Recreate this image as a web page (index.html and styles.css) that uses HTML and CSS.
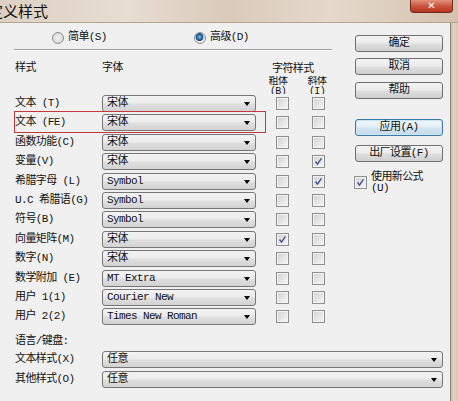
FILE: index.html
```html
<!DOCTYPE html>
<html lang="zh">
<head>
<meta charset="utf-8">
<title>定义样式</title>
<link rel="stylesheet" href="styles.css">
</head>
<body>
<div class="titlebar">
  <span class="title">定义样式</span>
  <span class="close">✕</span>
</div>
<div class="below">
  <div class="client">
    <div class="top">
      <div class="left">
        <div class="radios">
          <div class="radio-item first"><span class="radio"></span>简单(S)</div>
          <div class="radio-item"><span class="radio on"></span>高级(D)</div>
        </div>
        <div class="sep"></div>
        <div class="head">
          <div class="h-cell">样式</div>
          <div class="h-cell">字体</div>
          <div class="h-style">
            <div class="h-cell">字符样式</div>
            <div class="sub">
              <div class="sub-item">粗体<br>(B)</div>
              <div class="sub-item">斜体<br>(I)</div>
            </div>
          </div>
        </div>
        <div class="rows">
          <div class="lbl">文本 (T)</div><div class="dd"><span>宋体</span><i class="arrow"></i></div><span></span><span class="cb"></span><span></span><span class="cb"></span>
          <div class="lbl">文本 (FE)</div><div class="dd"><span>宋体</span><i class="arrow"></i></div><span></span><span class="cb"></span><span></span><span class="cb"></span>
          <div class="lbl">函数功能(C)</div><div class="dd"><span>宋体</span><i class="arrow"></i></div><span></span><span class="cb"></span><span></span><span class="cb"></span>
          <div class="lbl">变量(V)</div><div class="dd"><span>宋体</span><i class="arrow"></i></div><span></span><span class="cb"></span><span></span><span class="cb on"><svg viewBox="0 0 13 13"><path d="M3 6.5 L5.3 9.5 L10 2.8"/></svg></span>
          <div class="lbl">希腊字母 (L)</div><div class="dd"><span>Symbol</span><i class="arrow"></i></div><span></span><span class="cb"></span><span></span><span class="cb on"><svg viewBox="0 0 13 13"><path d="M3 6.5 L5.3 9.5 L10 2.8"/></svg></span>
          <div class="lbl">U.C 希腊语(G)</div><div class="dd"><span>Symbol</span><i class="arrow"></i></div><span></span><span class="cb"></span><span></span><span class="cb"></span>
          <div class="lbl">符号(B)</div><div class="dd"><span>Symbol</span><i class="arrow"></i></div><span></span><span class="cb"></span><span></span><span class="cb"></span>
          <div class="lbl">向量矩阵(M)</div><div class="dd"><span>宋体</span><i class="arrow"></i></div><span></span><span class="cb on"><svg viewBox="0 0 13 13"><path d="M3 6.5 L5.3 9.5 L10 2.8"/></svg></span><span></span><span class="cb"></span>
          <div class="lbl">数字(N)</div><div class="dd"><span>宋体</span><i class="arrow"></i></div><span></span><span class="cb"></span><span></span><span class="cb"></span>
          <div class="lbl">数学附加 (E)</div><div class="dd"><span>MT Extra</span><i class="arrow"></i></div><span></span><span class="cb"></span><span></span><span class="cb"></span>
          <div class="lbl">用户 1(1)</div><div class="dd"><span>Courier New</span><i class="arrow"></i></div><span></span><span class="cb"></span><span></span><span class="cb"></span>
          <div class="lbl">用户 2(2)</div><div class="dd"><span>Times New Roman</span><i class="arrow"></i></div><span></span><span class="cb"></span><span></span><span class="cb"></span>
          <div class="highlight"></div>
        </div>
      </div>
      <div class="right">
        <div class="btn b1">确定</div>
        <div class="btn b2">取消</div>
        <div class="btn b3">帮助</div>
        <div class="btn b4 default">应用(A)</div>
        <div class="btn b5">出厂设置(F)</div>
        <div class="chk-row">
          <span class="cb on"><svg viewBox="0 0 13 13"><path d="M3 6.5 L5.3 9.5 L10 2.8"/></svg></span>
          <div class="chk-text">使用新公式<br>(U)</div>
        </div>
      </div>
    </div>
    <div class="bottom">
      <div class="b-title">语言/键盘:</div>
      <div class="b-grid">
        <div class="lbl">文本样式(X)</div><div class="dd wide"><span>任意</span><i class="arrow"></i></div>
        <div class="lbl">其他样式(O)</div><div class="dd wide"><span>任意</span><i class="arrow"></i></div>
      </div>
    </div>
  </div>
  <div class="frame"></div>
</div>
</body>
</html>
```

FILE: styles.css
```css
* { box-sizing: border-box; }

html, body {
  margin: 0;
  padding: 0;
}

body {
  width: 458px;
  height: 401px;
  overflow: hidden;
  background: #f0f0f0;
  color: #111;
  font-family: "Liberation Mono", "Noto Sans CJK SC", monospace;
  font-size: 11px;
  letter-spacing: -0.6px;
  line-height: 1;
}

.titlebar {
  height: 23px;
  display: flex;
  align-items: flex-start;
  overflow: hidden;
  background: linear-gradient(90deg, #ded1c3 0%, #e7ddd2 28%, #dacaba 50%, #e5d9cc 72%, #d5c2ae 100%);
  border-bottom: 1px solid #b3a493;
}

.title {
  font-family: "Noto Sans CJK SC", sans-serif;
  font-size: 15px;
  letter-spacing: 0;
  line-height: 22px;
  margin-left: -12px;
  color: #111;
}

.close {
  margin-left: auto;
  margin-right: 5px;
  width: 43px;
  height: 13px;
  border: 1px solid #6e2c20;
  border-top: none;
  border-radius: 0 0 4px 4px;
  background: linear-gradient(#e2917c, #c9513a 55%, #b8351f);
  color: #fff;
  font-family: "DejaVu Sans", sans-serif;
  font-size: 10px;
  font-weight: bold;
  letter-spacing: 0;
  line-height: 12px;
  text-align: center;
}

.below {
  display: flex;
  height: 378px;
}

.client {
  width: 450px;
  display: flex;
  flex-direction: column;
}

.frame {
  width: 8px;
  background: linear-gradient(90deg, #cdbdad, #e0d2c3 40%, #d6c6b5);
  border-left: 1px solid #8d8070;
}

.top {
  display: grid;
  grid-template-columns: 355px 88px;
}

.left {
  padding-left: 15px;
}

.radios {
  display: flex;
  margin-top: 8px;
  height: 13px;
  padding-left: 37px;
}

.radio-item {
  display: flex;
  align-items: center;
  gap: 4px;
  line-height: 13px;
}

.radio-item.first {
  width: 142px;
}

.radio {
  width: 12px;
  height: 12px;
  border-radius: 50%;
  border: 1px solid #8d9090;
  background: radial-gradient(circle at 50% 50%, #f4f4f4 0%, #e0e0e0 55%, #cfcfcf 100%);
}

.radio.on {
  background: radial-gradient(circle at 45% 40%, #8fc3ea 0%, #2a6aa3 30%, #1b4b80 45%, #e4e4e4 52%, #f4f4f4 100%);
}

.sep {
  margin-top: 5px;
  margin-left: -1px;
  width: 318px;
  height: 2px;
  border-top: 1px solid #a0a0a0;
  border-bottom: 1px solid #ffffff;
}

.head {
  display: grid;
  grid-template-columns: 87px 154px 100px;
  height: 44px;
}

.head > .h-cell {
  margin-top: 10px;
  line-height: 14px;
  height: 14px;
}

.h-style .h-cell {
  margin-top: 11px;
  line-height: 14px;
  padding-left: 16px;
}

.sub {
  display: flex;
  gap: 19px;
  margin-left: 12px;
}

.sub-item {
  width: 20px;
  height: 18px;
  overflow: hidden;
  font-size: 10px;
  line-height: 10px;
  text-align: center;
  padding-top: 1px;
}

.rows {
  position: relative;
  display: grid;
  grid-template-columns: 87px 154px 20px 13px 23px 13px;
  grid-auto-rows: 17px;
  row-gap: 2.4px;
  align-items: center;
}

.lbl {
  line-height: 17px;
  white-space: pre;
}

.dd {
  height: 17px;
  display: flex;
  align-items: center;
  justify-content: space-between;
  padding: 0 5px 0 4px;
  border: 1px solid #767676;
  border-radius: 3px;
  background: linear-gradient(#f3f3f3 0%, #ececec 45%, #dfdfdf 55%, #d2d2d2 100%);
  white-space: pre;
}

.arrow {
  width: 0;
  height: 0;
  border-left: 3.5px solid transparent;
  border-right: 3.5px solid transparent;
  border-top: 4px solid #000;
  margin-top: 1px;
}

.cb {
  display: block;
  width: 13px;
  height: 13px;
  border: 1px solid #8e8f8f;
  background: linear-gradient(135deg, #d2d2d2, #f6f6f6);
  box-shadow: inset 0 0 0 1px #f3f3f3;
}

.cb svg {
  display: block;
  width: 11px;
  height: 11px;
}

.cb svg path {
  fill: none;
  stroke: #3a4f8e;
  stroke-width: 1.6;
}

.highlight {
  position: absolute;
  left: -1px;
  top: 16px;
  width: 252px;
  height: 22px;
  border: 1px solid #c0393f;
  pointer-events: none;
}

.right {
  display: flex;
  flex-direction: column;
  padding-top: 12px;
}

.btn {
  height: 17px;
  border: 1px solid #707070;
  border-radius: 3px;
  background: linear-gradient(#f4f4f4 0%, #ececec 45%, #dddddd 55%, #cfcfcf 100%);
  text-align: center;
  line-height: 15px;
}

.b2 { margin-top: 6px; }
.b3 { margin-top: 7px; }
.b4 { margin-top: 20px; }
.b5 { margin-top: 9px; }

.btn.default {
  border-color: #3d7aa8;
  box-shadow: inset 0 0 0 1px #c9e6f5;
  background: linear-gradient(#eef6fb 0%, #e3eff7 45%, #d2e5f1 55%, #c3dbeb 100%);
}

.chk-row {
  display: flex;
  margin-top: 10px;
  margin-left: -1px;
}

.chk-row .cb {
  margin-top: 4px;
  margin-right: 4px;
}

.chk-text {
  line-height: 11px;
}

.bottom {
  padding-left: 15px;
  margin-top: 9px;
}

.b-title {
  line-height: 14px;
  height: 14px;
}

.b-grid {
  margin-top: 3px;
  display: grid;
  grid-template-columns: 87px 341px;
  grid-auto-rows: 17px;
  row-gap: 3px;
  align-items: center;
}
```
